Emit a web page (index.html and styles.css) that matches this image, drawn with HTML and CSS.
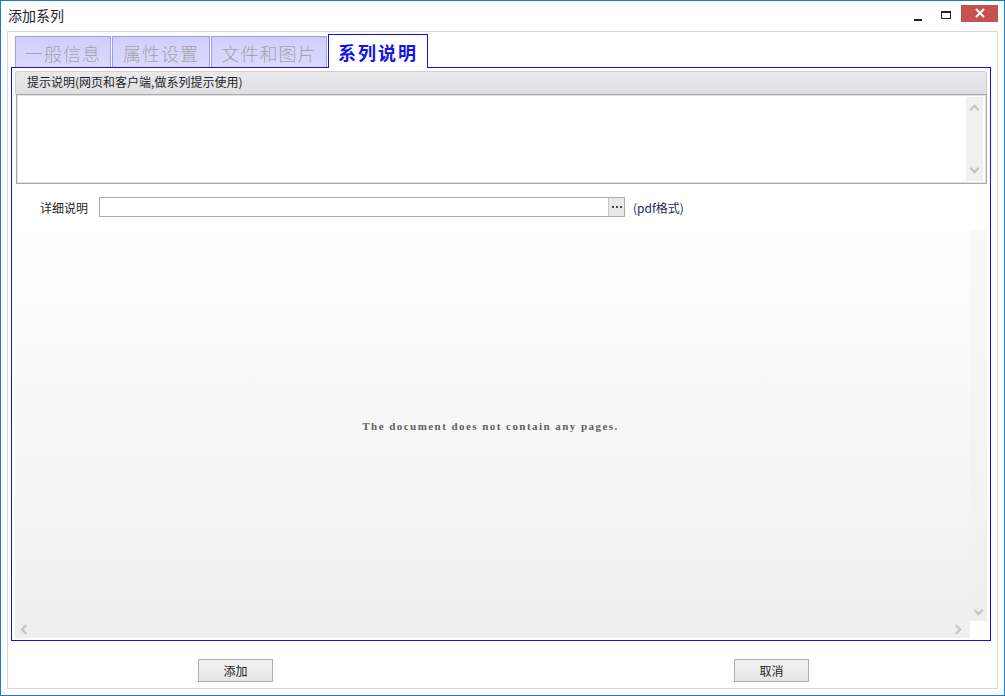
FILE: index.html
```html
<!DOCTYPE html>
<html>
  <head>
    <meta charset="utf-8" />
    <link rel="stylesheet" href="styles.css">
  </head>
  <body>
    <div class="window">
      <div class="titlebar">
        <span class="title">添加系列</span>
        <span class="ctl min"></span>
        <span class="ctl max"></span>
        <span class="ctl close">
          <svg width="12" height="10" viewBox="0 0 12 10"><path d="M2 1 L10 9 M10 1 L2 9" stroke="#fff" stroke-width="2"/></svg>
        </span>
      </div>
      <div class="frame">
        <div class="tabs">
          <div class="tab t1">一般信息</div>
          <div class="tab t2">属性设置</div>
          <div class="tab t3">文件和图片</div>
          <div class="tab active">系列说明</div>
        </div>
        <div class="panel">
          <div class="group">
            <div class="group_head">提示说明(网页和客户端,做系列提示使用)</div>
            <div class="memo">
              <div class="vscroll">
                <span class="chev up"></span>
                <span class="chev down"></span>
              </div>
            </div>
          </div>
          <div class="field">
            <span class="label">详细说明</span>
            <div class="picker">
              <div class="picker_text"></div>
              <div class="picker_btn">
                <svg width="10" height="2" viewBox="0 0 10 2"><rect x="0" y="0" width="2" height="2" fill="#444"/><rect x="4" y="0" width="2" height="2" fill="#444"/><rect x="8" y="0" width="2" height="2" fill="#444"/></svg>
              </div>
            </div>
            <span class="hint">(pdf格式)</span>
          </div>
          <div class="viewer">
            <div class="viewer_main">
              <div class="page_area">
                <span class="empty">The document does not contain any pages.</span>
              </div>
              <div class="vbar">
                <span class="chev down"></span>
              </div>
            </div>
            <div class="hbar_row">
              <div class="hbar">
                <span class="chev left"></span>
                <span class="chev right"></span>
              </div>
              <div class="corner"></div>
            </div>
          </div>
        </div>
        <div class="buttons">
          <div class="btn ok">添加</div>
          <div class="btn cancel">取消</div>
        </div>
      </div>
    </div>
  </body>
</html>
```

FILE: styles.css
```css
*{
  box-sizing: border-box;
}
body{
  margin: 0px;
  background: #fff;
  font-family: "Noto Sans CJK SC", "Liberation Sans", sans-serif;
  font-size: 12px;
  color: #1e1e1e;
}
.window{
  width: 1005px;
  height: 696px;
  border: 1px solid #1a7bcc;
  border-top: none;
  background: #fff;
  display: flex;
  flex-direction: column;
}
.titlebar{
  height: 31px;
  display: flex;
  align-items: center;
  padding-left: 7px;
  border-top: 1px solid #1a7bcc;
}
.title{
  font-size: 14px;
  color: #222;
  flex: 1;
  margin-top: -2px;
}
.ctl{
  display: inline-block;
}
.min{
  width: 8px;
  height: 2px;
  background: #222;
  margin-top: 8px;
  margin-right: 19px;
}
.max{
  width: 10px;
  height: 8px;
  border: 1px solid #222;
  border-top-width: 2px;
  margin-top: -2px;
  margin-right: 10px;
}
.close{
  width: 37px;
  height: 17px;
  background: #c75050;
  margin-top: -6px;
  margin-right: 6px;
  display: flex;
  align-items: center;
  justify-content: center;
}
.frame{
  margin: 0px 6px 6px 6px;
  flex: 1;
  border: 1px solid #d9d9d9;
  display: flex;
  flex-direction: column;
  padding: 3px 6px 0px 3px;
}

/* tabs */
.tabs{
  display: flex;
  align-items: flex-end;
  height: 32px;
  padding-left: 4px;
  position: relative;
  z-index: 1;
}
.tab{
  height: 31px;
  border: 1px solid #9c9cf2;
  border-bottom: none;
  background: linear-gradient(#cfcffb, #dadafd);
  color: #a3a3a3;
  font-size: 18px;
  font-weight: 300;
  display: flex;
  align-items: center;
  justify-content: center;
  margin-right: 1px;
  padding-top: 1px;
  letter-spacing: 1px;
}
.t1{ width: 96px; }
.t2{ width: 98px; }
.t3{ width: 116px; }
.tab.active{
  width: 100px;
  height: 34px;
  margin-bottom: -1px;
  background: #fff;
  border-color: #1010f0;
  color: #1414e6;
  font-weight: bold;
  letter-spacing: 2px;
}
.panel{
  flex: none;
  height: 574px;
  border: 1px solid #1010f0;
  display: flex;
  flex-direction: column;
  padding: 3px 3px 2px 3px;
}

/* group box */
.group{
  display: flex;
  flex-direction: column;
}
.group_head{
  height: 23px;
  background: linear-gradient(#e9e9ec, #e0e0e3);
  border: 1px solid #d0d0d3;
  border-bottom: none;
  border-radius: 3px 3px 0px 0px;
  padding-left: 11px;
  line-height: 20px;
}
.memo{
  height: 90px;
  margin-left: 1px;
  border: 1px solid #a9a9a9;
  box-shadow: inset 0px 0px 0px 1px #e2e2e2;
  background: #fff;
  display: flex;
  justify-content: flex-end;
  padding: 2px 3px 2px 2px;
}
.vscroll{
  width: 17px;
  background: #f0f0f0;
  display: flex;
  flex-direction: column;
  justify-content: space-between;
  align-items: center;
  padding: 6px 0px;
}
.chev{
  display: inline-block;
  width: 7px;
  height: 7px;
  border: solid #c2c2c2;
  border-width: 2px 2px 0px 0px;
}
.chev.up{ transform: rotate(-45deg); margin-top: 3px; }
.chev.down{ transform: rotate(135deg); margin-bottom: 3px; }
.chev.left{ transform: rotate(-135deg); }
.chev.right{ transform: rotate(45deg); }

/* file field */
.field{
  display: flex;
  align-items: center;
  height: 20px;
  margin-top: 13px;
  padding-left: 25px;
}
.label{
  width: 59px;
}
.picker{
  display: flex;
  width: 526px;
  height: 20px;
  border: 1px solid #ababab;
}
.picker_text{
  flex: 1;
}
.picker_btn{
  width: 16px;
  border-left: 1px solid #c6c6c6;
  background: #e8e8e8;
  display: flex;
  align-items: center;
  justify-content: center;
}
.hint{
  margin-left: 8px;
  color: #1d2a5e;
}

/* pdf viewer */
.viewer{
  margin-top: 13px;
  flex: 1;
  display: flex;
  flex-direction: column;
}
.viewer_main{
  flex: 1;
  display: flex;
}
.page_area{
  flex: 1;
  background: linear-gradient(#ffffff, #efefef);
  display: flex;
  align-items: center;
  justify-content: center;
  padding-right: 4px;
}
.empty{
  font-family: "Liberation Serif", "DejaVu Serif", serif;
  font-weight: bold;
  font-size: 11px;
  letter-spacing: 1.45px;
  color: #5f5f5f;
}
.vbar{
  width: 17px;
  background: linear-gradient(#f9f9f9, #efefef);
  display: flex;
  flex-direction: column;
  justify-content: flex-end;
  align-items: center;
  padding-bottom: 4px;
}
.hbar_row{
  display: flex;
  height: 17px;
}
.hbar{
  flex: 1;
  background: #efefef;
  display: flex;
  justify-content: space-between;
  align-items: center;
  padding: 0px 10px 0px 7px;
}
.corner{
  width: 17px;
  background: #fff;
}

/* buttons */
.buttons{
  display: flex;
  padding-top: 18px;
  padding-left: 187px;
}
.btn{
  width: 75px;
  height: 23px;
  border: 1px solid #adadad;
  background: linear-gradient(#f2f2f2, #e6e6e6);
  text-align: center;
  line-height: 21px;
}
.cancel{
  margin-left: 461px;
}
```
